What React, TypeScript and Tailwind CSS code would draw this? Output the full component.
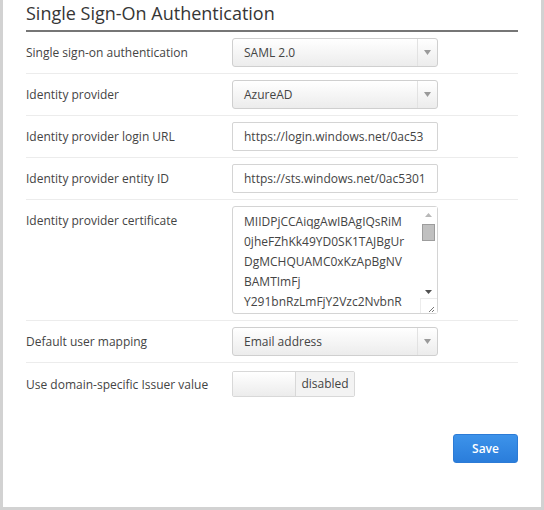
import React from 'react';

const CERT_LINES = [
  'MIIDPjCCAiqgAwIBAgIQsRiM',
  '0jheFZhKk49YD0SK1TAJBgUr',
  'DgMCHQUAMC0xKzApBgNV',
  'BAMTImFj',
  'Y291bnRzLmFjY2Vzc2NvbnR',
];

function Arrow() {
  return (
    <svg width="7" height="5" viewBox="0 0 7 5">
      <path d="M0 0 L7 0 L3.5 5 Z" fill="#9a9a9a" />
    </svg>
  );
}

function Select({ value }: { value: string }) {
  return (
    <div className="flex h-[29px] w-[206px] rounded-[3px] border border-[#cfcfcf] bg-gradient-to-b from-white to-[#ececec] text-[12px] text-[#444]">
      <div className="flex flex-1 items-center pl-[11px]">{value}</div>
      <div className="flex w-[20px] items-center justify-center border-l border-[#e2e2e2]">
        <Arrow />
      </div>
    </div>
  );
}

function TextInput({ value }: { value: string }) {
  return (
    <div className="flex h-[29px] w-[206px] items-center rounded-[2px] border border-[#d4d4d4] bg-white pl-[11px] text-[12px] text-[#444] whitespace-nowrap">
      {value}
    </div>
  );
}

function CertArea() {
  return (
    <div className="relative h-[108px] w-[206px] rounded-[3px] border border-[#d4d4d4] bg-white">
      <div className="pl-[11px] pt-[5px] text-[12px] leading-[20px] text-[#444]">
        {CERT_LINES.map((l) => (
          <div key={l}>{l}</div>
        ))}
      </div>
      {/* scrollbar */}
      <div className="absolute right-0 top-0 flex h-[92px] w-[17px] flex-col items-center bg-white">
        <div className="flex h-[15px] items-center justify-center">
          <svg width="7" height="4" viewBox="0 0 7 4">
            <path d="M0 4 L7 4 L3.5 0 Z" fill="#b8b8b8" />
          </svg>
        </div>
        <div className="mt-[2px] h-[17px] w-[13px] border border-[#9d9d9d] bg-[#c0c0c0]" />
        <div className="flex-1" />
        <div className="flex h-[14px] items-center justify-center">
          <svg width="7" height="4" viewBox="0 0 7 4">
            <path d="M0 0 L7 0 L3.5 4 Z" fill="#505050" />
          </svg>
        </div>
      </div>
      <div className="absolute bottom-0 right-0 h-[15px] w-[17px] border-l border-t border-[#ececec] bg-white">
        <svg width="16" height="15" viewBox="0 0 16 15" className="absolute">
          <path d="M13 8 L8 13 M13 11 L11 13" stroke="#777" strokeWidth="1" />
        </svg>
      </div>
    </div>
  );
}

function Toggle() {
  return (
    <div className="flex h-[26px] w-[123px] rounded-[2px] border border-[#d8d8d8] text-[12px] text-[#444] overflow-hidden">
      <div className="w-[63px] border-r border-[#d8d8d8] bg-gradient-to-b from-white to-[#ececec]" />
      <div className="flex flex-1 items-center justify-center bg-[#f3f3f3]">disabled</div>
    </div>
  );
}

function Row({
  label,
  children,
  top,
  last,
}: {
  label: string;
  children: React.ReactNode;
  top?: boolean;
  last?: boolean;
}) {
  return (
    <div
      className={
        'flex py-[6px] ' +
        (top ? 'items-start ' : 'items-center ') +
        (last ? '' : 'border-b border-[#ececec]')
      }
    >
      <div className="w-[206px] text-[12px] leading-[29px] text-[#444]">{label}</div>
      {children}
    </div>
  );
}

export default function App() {
  return (
    <div className="h-[510px] w-[544px] border-x-[3px] border-b-[3px] border-[#d2d2d2] bg-white font-['Open_Sans',sans-serif]">
      <div className="px-[23px]">
        <h2 className="border-b-2 border-[#767676] pb-[4px] pt-[1px] text-[18px] leading-[25px] text-[#363636]">
          Single Sign-On Authentication
        </h2>
        <div>
          <Row label="Single sign-on authentication">
            <Select value="SAML 2.0" />
          </Row>
          <Row label="Identity provider">
            <Select value="AzureAD" />
          </Row>
          <Row label="Identity provider login URL">
            <TextInput value="https://login.windows.net/0ac53" />
          </Row>
          <Row label="Identity provider entity ID">
            <TextInput value="https://sts.windows.net/0ac5301" />
          </Row>
          <Row label="Identity provider certificate" top>
            <CertArea />
          </Row>
          <Row label="Default user mapping">
            <Select value="Email address" />
          </Row>
          <Row label="Use domain-specific Issuer value" last>
            <div className="py-[2px]">
              <Toggle />
            </div>
          </Row>
        </div>
        <div className="mt-[29px] flex justify-end">
          <button
            type="button"
            className="h-[29px] w-[65px] rounded-[3px] border border-[#2c7bd6] bg-gradient-to-b from-[#3d93ea] to-[#2a7ddb] text-[12px] font-semibold text-white"
          >
            Save
          </button>
        </div>
      </div>
    </div>
  );
}
